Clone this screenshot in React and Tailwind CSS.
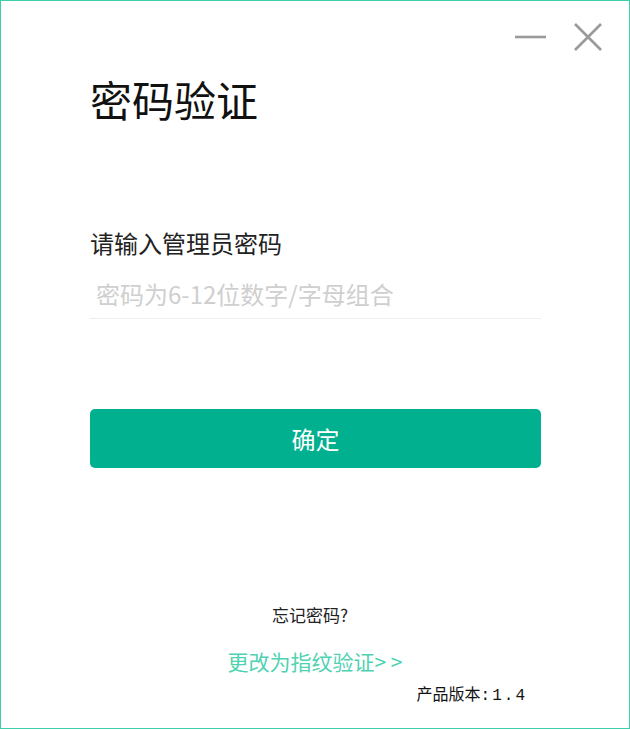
import React from "react";

export default function App() {
  const cjk = { fontFamily: '"Noto Sans CJK SC", "Noto Sans", sans-serif' };
  return (
    <div
      className="w-[630px] h-[729px] border border-[#3ccfa9] bg-white flex flex-col box-border"
      style={cjk}
    >
      <div className="flex justify-end items-center h-[60px] pr-[27px] pt-[12px] gap-[28px]">
        <svg width="31" height="4" viewBox="0 0 31 4">
          <line x1="0" y1="2" x2="31" y2="2" stroke="#9a9a9a" strokeWidth="2.6" />
        </svg>
        <svg width="28" height="28" viewBox="0 0 28 28">
          <line x1="1" y1="1" x2="27" y2="27" stroke="#9a9a9a" strokeWidth="2.6" />
          <line x1="27" y1="1" x2="1" y2="27" stroke="#9a9a9a" strokeWidth="2.6" />
        </svg>
      </div>
      <div className="flex flex-col px-[89px]">
        <div className="text-[42px] leading-[50px] text-[#111] mt-[13px]">密码验证</div>
        <div className="text-[24px] leading-[30px] text-[#222] mt-[104px]">请输入管理员密码</div>
        <div className="text-[24px] leading-[30px] text-[#cfcfcf] mt-[21px] pl-[6px]">密码为6-12位数字/字母组合</div>
        <div className="h-[1px] bg-[#eeeeee] mt-[9px] w-[451px]" />
        <div className="mt-[90px] h-[59px] w-[451px] rounded-[5px] bg-[#00b08e] flex items-center justify-center text-white text-[24px]">
          确定
        </div>
      </div>
      <div className="flex flex-col items-center mt-auto pb-[22px]">
        <div className="text-[17px] leading-[24px] text-[#222] ml-[-10px]">忘记密码?</div>
        <div className="text-[21px] leading-[28px] text-[#4fd2b2] mt-[20px]">更改为指纹验证&gt; &gt;</div>
        <div className="self-end mr-[102px] text-[16px] leading-[20px] text-[#111] mt-[8px]">
          产品版本<span style={{ fontFamily: '"Liberation Mono", monospace' }} className="tracking-[2px]">:1.4</span>
        </div>
      </div>
    </div>
  );
}
